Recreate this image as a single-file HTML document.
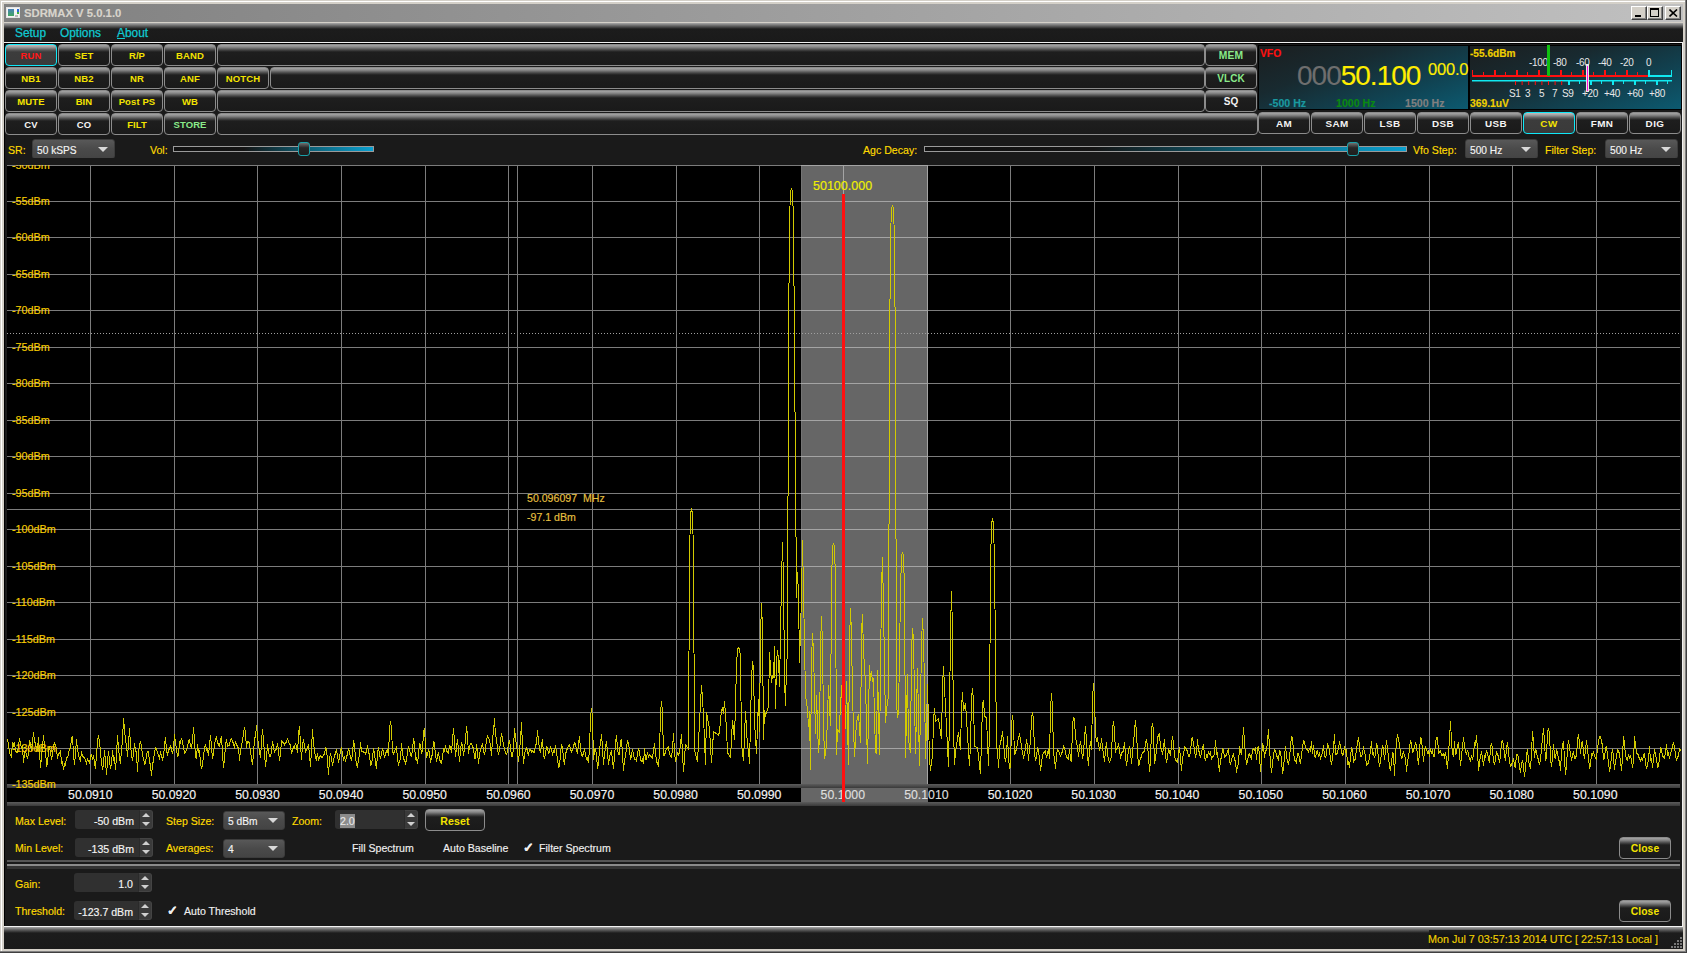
<!DOCTYPE html><html><head><meta charset="utf-8"><title>SDRMAX</title><style>
*{margin:0;padding:0;box-sizing:border-box}
html,body{width:1687px;height:953px;overflow:hidden;background:#d4d0c8;font-family:'Liberation Sans', sans-serif}
.abs{position:absolute}
.t{position:absolute;white-space:nowrap;line-height:1;-webkit-text-stroke:0.15px currentColor}
.b{position:absolute;height:22px;border:1px solid #8c8c8c;border-radius:4px;
background:linear-gradient(#a4a4a4 0px,#8a8a8a 2px,#444 5px,#1e1e1e 7px,#1a1a1a 100%);
font:bold 9.5px 'Liberation Sans', sans-serif;text-align:center;line-height:22px;color:#f2e200;letter-spacing:0.1px;white-space:nowrap}
.b.on{border-color:#10e8f8;background:linear-gradient(#c4baba 0px,#a0a0a0 2px,#5a5a5a 5px,#3c3c3c 7px,#3a3a3a 100%)}
.dd{position:absolute;height:20px;border:1px solid #3c3c3c;border-radius:3px;background:linear-gradient(#585858,#4a4a4a 50%,#444);
font:10.2px 'Liberation Sans', sans-serif;color:#f4f4f4;line-height:18px;padding-top:1.5px;padding-left:4px;white-space:nowrap;-webkit-text-stroke:0.15px currentColor}
.dd i{position:absolute;right:6px;top:7px;width:0;height:0;border-left:5px solid transparent;border-right:5px solid transparent;border-top:5px solid #d8d8d8}
.sp{position:absolute;height:19px}
.sp .v{position:absolute;left:0;top:0;bottom:0;right:14px;padding-right:5px;background:#303030;border-radius:3px 0 0 3px;text-align:right;font:10.6px 'Liberation Sans', sans-serif;color:#f4f4f4;line-height:19px;padding-top:1.5px;white-space:nowrap;-webkit-text-stroke:0.15px currentColor}
.sp .ar{position:absolute;right:0;top:0;width:14px;bottom:0;background:#3a3a3a;border-radius:0 3px 3px 0;border:1px solid #444;border-left:1px solid #2a2a2a}
.sp .ar:before{content:"";position:absolute;left:2px;top:2px;border-left:4px solid transparent;border-right:4px solid transparent;border-bottom:4px solid #d0d0d0}
.sp .ar:after{content:"";position:absolute;left:2px;bottom:2px;border-left:4px solid transparent;border-right:4px solid transparent;border-top:4px solid #d0d0d0}
</style></head><body>
<div class="abs" style="left:1px;top:1px;width:1684px;height:950px;border-left:1px solid #fff;border-top:1px solid #fff"></div>
<div class="abs" style="left:1685px;top:0;width:1px;height:952px;background:#808080"></div>
<div class="abs" style="left:1686px;top:0;width:1px;height:953px;background:#404040"></div>
<div class="abs" style="left:0;top:951px;width:1686px;height:1px;background:#808080"></div>
<div class="abs" style="left:0;top:952px;width:1687px;height:1px;background:#404040"></div>
<div class="abs" style="left:4px;top:4px;width:1679px;height:18px;background:linear-gradient(90deg,#808080,#c0c0c0)"></div>
<div class="abs" style="left:6px;top:7px;width:14px;height:11px;background:#f4f4f4;border:1px solid #e4e4e4"><div class="abs" style="left:1px;top:1px;width:6px;height:7px;background:linear-gradient(#4a80b8,#40a860)"></div><div class="abs" style="left:10px;top:1px;width:2px;height:3px;background:#2a6ad8"></div><div class="abs" style="left:10px;top:4px;width:2px;height:2px;background:#3ab040"></div><div class="abs" style="left:8px;top:7px;width:3px;height:2px;background:#bbb"></div></div>
<div class="t" style="left:24px;top:7px;font:bold 11.3px 'Liberation Sans', sans-serif;color:#d8d4cc;">SDRMAX V 5.0.1.0</div>
<div class="abs" style="left:1631px;top:6px;width:16px;height:14px;background:#d4d0c8;border-top:1px solid #fff;border-left:1px solid #fff;border-right:1px solid #404040;border-bottom:1px solid #404040;box-shadow:inset -1px -1px #808080"><div class="abs" style="left:3px;top:8px;width:6px;height:2px;background:#000"></div></div>
<div class="abs" style="left:1647px;top:6px;width:16px;height:14px;background:#d4d0c8;border-top:1px solid #fff;border-left:1px solid #fff;border-right:1px solid #404040;border-bottom:1px solid #404040;box-shadow:inset -1px -1px #808080"><div class="abs" style="left:2px;top:1px;width:9px;height:9px;border:1px solid #000;border-top-width:2px"></div></div>
<div class="abs" style="left:1665px;top:6px;width:16px;height:14px;background:#d4d0c8;border-top:1px solid #fff;border-left:1px solid #fff;border-right:1px solid #404040;border-bottom:1px solid #404040;box-shadow:inset -1px -1px #808080"><svg class="abs" style="left:3px;top:2px" width="9" height="8"><path d="M0.5,0.5 L8,7.5 M8,0.5 L0.5,7.5" stroke="#000" stroke-width="1.6"/></svg></div>
<div class="abs" style="left:4px;top:22px;width:1679px;height:1px;background:#d4d0c8"></div>
<div class="abs" style="left:4px;top:23px;width:1679px;height:19px;background:linear-gradient(#a8a8a8 0px,#606060 3px,#1c1c1c 6px,#1a1a1a 100%)"></div>
<div class="t" style="left:15px;top:26px;font:11.9px 'Liberation Sans', sans-serif;color:#10cad2;-webkit-text-stroke:0.25px #10cad2">Setup</div>
<div class="t" style="left:60px;top:26px;font:11.9px 'Liberation Sans', sans-serif;color:#10cad2;-webkit-text-stroke:0.25px #10cad2">Options</div>
<div class="t" style="left:117px;top:26px;font:11.9px 'Liberation Sans', sans-serif;color:#10cad2;-webkit-text-stroke:0.25px #10cad2"><u>A</u>bout</div>
<div class="abs" style="left:4px;top:42px;width:1679px;height:1px;background:#f0f0f0"></div>
<div class="abs" style="left:4px;top:43px;width:1679px;height:883px;background:#1a1a1a;border-left:1px solid #000;border-top:1px solid #000"></div>
<div class="abs" style="left:1682px;top:43px;width:1px;height:884px;background:#f0f0f0"></div>
<div class="b on" style="left:5px;top:44px;width:52px;color:#ff1818">RUN</div>
<div class="b" style="left:58px;top:44px;width:52px;color:#f4e400">SET</div>
<div class="b" style="left:111px;top:44px;width:52px;color:#f4e400">R/P</div>
<div class="b" style="left:164px;top:44px;width:52px;color:#f4e400">BAND</div>
<div class="b" style="left:5px;top:67px;width:52px;color:#f4e400">NB1</div>
<div class="b" style="left:58px;top:67px;width:52px;color:#f4e400">NB2</div>
<div class="b" style="left:111px;top:67px;width:52px;color:#f4e400">NR</div>
<div class="b" style="left:164px;top:67px;width:52px;color:#f4e400">ANF</div>
<div class="b" style="left:217px;top:67px;width:52px;color:#f4e400">NOTCH</div>
<div class="b" style="left:5px;top:90px;width:52px;color:#f4e400">MUTE</div>
<div class="b" style="left:58px;top:90px;width:52px;color:#f4e400">BIN</div>
<div class="b" style="left:111px;top:90px;width:52px;color:#f4e400">Post PS</div>
<div class="b" style="left:164px;top:90px;width:52px;color:#f4e400">WB</div>
<div class="b" style="left:5px;top:113px;width:52px;color:#f4f4f4">CV</div>
<div class="b" style="left:58px;top:113px;width:52px;color:#f4f4f4">CO</div>
<div class="b" style="left:111px;top:113px;width:52px;color:#f4e400">FILT</div>
<div class="b" style="left:164px;top:113px;width:52px;color:#8aea8a">STORE</div>
<div class="b" style="left:217px;top:44px;width:988px"></div>
<div class="b" style="left:270px;top:67px;width:935px"></div>
<div class="b" style="left:217px;top:90px;width:988px"></div>
<div class="b" style="left:217px;top:113px;width:1041px"></div>
<div class="b" style="left:1205px;top:44px;width:52px;color:#8aea8a;font-size:10.3px">MEM</div>
<div class="b" style="left:1205px;top:67px;width:52px;color:#8aea8a;font-size:10px">VLCK</div>
<div class="b" style="left:1205px;top:90px;width:52px;color:#f4f4f4;font-size:10px">SQ</div>
<div class="b" style="left:1258px;top:112px;width:52px;color:#f4f4f4;letter-spacing:0.4px;font-size:9.9px">AM</div>
<div class="b" style="left:1311px;top:112px;width:52px;color:#f4f4f4;letter-spacing:0.4px;font-size:9.9px">SAM</div>
<div class="b" style="left:1364px;top:112px;width:52px;color:#f4f4f4;letter-spacing:0.4px;font-size:9.9px">LSB</div>
<div class="b" style="left:1417px;top:112px;width:52px;color:#f4f4f4;letter-spacing:0.4px;font-size:9.9px">DSB</div>
<div class="b" style="left:1470px;top:112px;width:52px;color:#f4f4f4;letter-spacing:0.4px;font-size:9.9px">USB</div>
<div class="b on" style="left:1523px;top:112px;width:52px;color:#f4e400;letter-spacing:0.4px;font-size:9.9px">CW</div>
<div class="b" style="left:1576px;top:112px;width:52px;color:#f4f4f4;letter-spacing:0.4px;font-size:9.9px">FMN</div>
<div class="b" style="left:1629px;top:112px;width:52px;color:#f4f4f4;letter-spacing:0.4px;font-size:9.9px">DIG</div>
<div class="abs" style="left:1258px;top:45px;width:211px;height:65px;background:linear-gradient(160deg,#1b1e1f 0%,#182a30 35%,#104454 72%,#0c5a70 100%);border:1px solid #000"></div>
<div class="t" style="left:1260px;top:48px;font:bold 10.3px 'Liberation Sans', sans-serif;color:#ff1010;">VFO</div>
<div class="t" style="left:1297px;top:60px;font:28px 'Liberation Sans', sans-serif;color:#6e6e6e;letter-spacing:-1px">000<span style="color:#ffee00">50.100</span></div>
<div class="t" style="left:1428px;top:60px;font:16.5px 'Liberation Sans', sans-serif;color:#ffee00;letter-spacing:-0.2px">000.0</div>
<div class="t" style="left:1269px;top:97px;font:bold 10.6px 'Liberation Sans', sans-serif;color:#1a9aa0;">-500 Hz</div>
<div class="t" style="left:1336px;top:97px;font:bold 10.6px 'Liberation Sans', sans-serif;color:#0a8a10;">1000 Hz</div>
<div class="t" style="left:1405px;top:97px;font:bold 10.6px 'Liberation Sans', sans-serif;color:#808080;">1500 Hz</div>
<div class="abs" style="left:1469px;top:45px;width:213px;height:65px;background:linear-gradient(160deg,#1b1e1f 0%,#182a30 35%,#104454 72%,#0c5a70 100%);border:1px solid #000"></div>
<div class="t" style="left:1470px;top:48px;font:bold 10.1px 'Liberation Sans', sans-serif;color:#f0d000;">-55.6dBm</div>
<div class="t" style="left:1470px;top:98px;font:bold 10.3px 'Liberation Sans', sans-serif;color:#f0d000;">369.1uV</div>
<svg class="abs" style="left:1469px;top:45px" width="213" height="65" viewBox="1469 45 213 65"><text x="1529" y="66" font-family="Liberation Sans" font-size="10" fill="#e8e8e8" letter-spacing="-0.3">-100</text><text x="1553" y="66" font-family="Liberation Sans" font-size="10" fill="#e8e8e8" letter-spacing="-0.3">-80</text><text x="1576" y="66" font-family="Liberation Sans" font-size="10" fill="#e8e8e8" letter-spacing="-0.3">-60</text><text x="1598" y="66" font-family="Liberation Sans" font-size="10" fill="#e8e8e8" letter-spacing="-0.3">-40</text><text x="1620" y="66" font-family="Liberation Sans" font-size="10" fill="#e8e8e8" letter-spacing="-0.3">-20</text><text x="1646" y="66" font-family="Liberation Sans" font-size="10" fill="#e8e8e8" letter-spacing="-0.3">0</text><text x="1509" y="96.5" font-family="Liberation Sans" font-size="10" fill="#e8e8e8" letter-spacing="-0.3">S1</text><text x="1525" y="96.5" font-family="Liberation Sans" font-size="10" fill="#e8e8e8" letter-spacing="-0.3">3</text><text x="1539" y="96.5" font-family="Liberation Sans" font-size="10" fill="#e8e8e8" letter-spacing="-0.3">5</text><text x="1552" y="96.5" font-family="Liberation Sans" font-size="10" fill="#e8e8e8" letter-spacing="-0.3">7</text><text x="1562" y="96.5" font-family="Liberation Sans" font-size="10" fill="#e8e8e8" letter-spacing="-0.3">S9</text><text x="1582" y="96.5" font-family="Liberation Sans" font-size="10" fill="#e8e8e8" letter-spacing="-0.3">+20</text><text x="1604" y="96.5" font-family="Liberation Sans" font-size="10" fill="#e8e8e8" letter-spacing="-0.3">+40</text><text x="1627" y="96.5" font-family="Liberation Sans" font-size="10" fill="#e8e8e8" letter-spacing="-0.3">+60</text><text x="1649" y="96.5" font-family="Liberation Sans" font-size="10" fill="#e8e8e8" letter-spacing="-0.3">+80</text><rect x="1472" y="75" width="176" height="2" fill="#ff1010"/><rect x="1648" y="75" width="24" height="2" fill="#10e8f0"/><rect x="1472" y="72" width="1" height="4" fill="#ff1010"/><rect x="1483" y="72" width="1" height="4" fill="#ff1010"/><rect x="1494" y="70" width="2" height="6" fill="#ff1010"/><rect x="1505" y="72" width="1" height="4" fill="#ff1010"/><rect x="1516" y="70" width="2" height="6" fill="#ff1010"/><rect x="1527" y="72" width="1" height="4" fill="#ff1010"/><rect x="1538" y="70" width="2" height="6" fill="#ff1010"/><rect x="1549" y="72" width="1" height="4" fill="#ff1010"/><rect x="1560" y="70" width="2" height="6" fill="#ff1010"/><rect x="1571" y="72" width="1" height="4" fill="#ff1010"/><rect x="1582" y="70" width="2" height="6" fill="#ff1010"/><rect x="1593" y="72" width="1" height="4" fill="#ff1010"/><rect x="1604" y="70" width="2" height="6" fill="#ff1010"/><rect x="1615" y="72" width="1" height="4" fill="#ff1010"/><rect x="1626" y="70" width="2" height="6" fill="#ff1010"/><rect x="1637" y="72" width="1" height="4" fill="#ff1010"/><rect x="1648" y="70" width="2" height="6" fill="#10e8f0"/><rect x="1472" y="70" width="1" height="6" fill="#ff1010"/><rect x="1671" y="70" width="1" height="6" fill="#10e8f0"/><rect x="1472" y="80" width="200" height="1.5" fill="#10e8f0"/><rect x="1515.0" y="81" width="1" height="4" fill="#ff1010"/><rect x="1521.6" y="81" width="1" height="4" fill="#ff1010"/><rect x="1528.2" y="81" width="1" height="4" fill="#ff1010"/><rect x="1534.8" y="81" width="1" height="4" fill="#ff1010"/><rect x="1541.4" y="81" width="1" height="4" fill="#ff1010"/><rect x="1548.0" y="81" width="1" height="4" fill="#ff1010"/><rect x="1554.6" y="81" width="1" height="4" fill="#ff1010"/><rect x="1561.2" y="81" width="1" height="4" fill="#ff1010"/><rect x="1568" y="81" width="2" height="4" fill="#10e8f0"/><rect x="1579" y="81" width="1" height="3" fill="#10e8f0"/><rect x="1590" y="81" width="2" height="4" fill="#10e8f0"/><rect x="1601" y="81" width="1" height="3" fill="#10e8f0"/><rect x="1612" y="81" width="2" height="4" fill="#10e8f0"/><rect x="1623" y="81" width="1" height="3" fill="#10e8f0"/><rect x="1634" y="81" width="2" height="4" fill="#10e8f0"/><rect x="1645" y="81" width="1" height="3" fill="#10e8f0"/><rect x="1656" y="81" width="2" height="4" fill="#10e8f0"/><rect x="1667" y="81" width="1" height="3" fill="#10e8f0"/><rect x="1547" y="45" width="3" height="31" fill="#10c010"/><rect x="1586" y="64" width="3" height="28" fill="#e8e8e8"/><rect x="1587" y="66" width="1" height="25" fill="#ff10e0"/></svg>
<div class="t" style="left:8px;top:144px;font:10.6px 'Liberation Sans', sans-serif;color:#ffda00;">SR:</div>
<div class="dd" style="left:32px;top:139px;width:83px">50 kSPS<i></i></div>
<div class="t" style="left:150px;top:144px;font:10.6px 'Liberation Sans', sans-serif;color:#ffda00;">Vol:</div>
<div class="abs" style="left:173px;top:146px;width:201px;height:6px;border:1px solid #9a9a9a;background:linear-gradient(90deg,#111 0%,#141414 35%,#0e5a6e 65%,#0aa0d0 100%)"></div>
<div class="abs" style="left:298px;top:142px;width:12px;height:14px;border:1px solid #1aa0a8;border-radius:3px;background:linear-gradient(#707070,#262626 40%,#1e1e1e)"></div>
<div class="t" style="left:863px;top:144px;font:10.6px 'Liberation Sans', sans-serif;color:#ffda00;">Agc Decay:</div>
<div class="abs" style="left:924px;top:146px;width:483px;height:6px;border:1px solid #9a9a9a;background:linear-gradient(90deg,#111 0%,#141414 35%,#0e5a6e 65%,#0aa0d0 100%)"></div>
<div class="abs" style="left:1347px;top:142px;width:12px;height:14px;border:1px solid #1aa0a8;border-radius:3px;background:linear-gradient(#707070,#262626 40%,#1e1e1e)"></div>
<div class="t" style="left:1413px;top:144px;font:10.6px 'Liberation Sans', sans-serif;color:#ffda00;">Vfo Step:</div>
<div class="dd" style="left:1465px;top:139px;width:73px">500 Hz<i></i></div>
<div class="t" style="left:1545px;top:144px;font:10.6px 'Liberation Sans', sans-serif;color:#ffda00;">Filter Step:</div>
<div class="dd" style="left:1605px;top:139px;width:73px">500 Hz<i></i></div>
<div class="abs" style="left:5px;top:158px;width:1677px;height:7px;background:#1a1a1a"></div>
<svg class="abs" style="left:0;top:0" width="1687" height="953" viewBox="0 0 1687 953"><rect x="7" y="165" width="1673" height="620" fill="#000"/><rect x="801" y="165" width="127" height="620" fill="#666666"/><rect x="801" y="165" width="1" height="620" fill="#747474"/><rect x="7" y="165" width="794" height="1" fill="#7c7c7c"/><rect x="801" y="165" width="127" height="1" fill="#a4a4a4"/><rect x="928" y="165" width="752" height="1" fill="#7c7c7c"/><rect x="7" y="201" width="794" height="1" fill="#7c7c7c"/><rect x="801" y="201" width="127" height="1" fill="#a4a4a4"/><rect x="928" y="201" width="752" height="1" fill="#7c7c7c"/><rect x="7" y="237" width="794" height="1" fill="#7c7c7c"/><rect x="801" y="237" width="127" height="1" fill="#a4a4a4"/><rect x="928" y="237" width="752" height="1" fill="#7c7c7c"/><rect x="7" y="274" width="794" height="1" fill="#7c7c7c"/><rect x="801" y="274" width="127" height="1" fill="#a4a4a4"/><rect x="928" y="274" width="752" height="1" fill="#7c7c7c"/><rect x="7" y="310" width="794" height="1" fill="#7c7c7c"/><rect x="801" y="310" width="127" height="1" fill="#a4a4a4"/><rect x="928" y="310" width="752" height="1" fill="#7c7c7c"/><rect x="7" y="347" width="794" height="1" fill="#7c7c7c"/><rect x="801" y="347" width="127" height="1" fill="#a4a4a4"/><rect x="928" y="347" width="752" height="1" fill="#7c7c7c"/><rect x="7" y="383" width="794" height="1" fill="#7c7c7c"/><rect x="801" y="383" width="127" height="1" fill="#a4a4a4"/><rect x="928" y="383" width="752" height="1" fill="#7c7c7c"/><rect x="7" y="420" width="794" height="1" fill="#7c7c7c"/><rect x="801" y="420" width="127" height="1" fill="#a4a4a4"/><rect x="928" y="420" width="752" height="1" fill="#7c7c7c"/><rect x="7" y="456" width="794" height="1" fill="#7c7c7c"/><rect x="801" y="456" width="127" height="1" fill="#a4a4a4"/><rect x="928" y="456" width="752" height="1" fill="#7c7c7c"/><rect x="7" y="493" width="794" height="1" fill="#7c7c7c"/><rect x="801" y="493" width="127" height="1" fill="#a4a4a4"/><rect x="928" y="493" width="752" height="1" fill="#7c7c7c"/><rect x="7" y="529" width="794" height="1" fill="#7c7c7c"/><rect x="801" y="529" width="127" height="1" fill="#a4a4a4"/><rect x="928" y="529" width="752" height="1" fill="#7c7c7c"/><rect x="7" y="566" width="794" height="1" fill="#7c7c7c"/><rect x="801" y="566" width="127" height="1" fill="#a4a4a4"/><rect x="928" y="566" width="752" height="1" fill="#7c7c7c"/><rect x="7" y="602" width="794" height="1" fill="#7c7c7c"/><rect x="801" y="602" width="127" height="1" fill="#a4a4a4"/><rect x="928" y="602" width="752" height="1" fill="#7c7c7c"/><rect x="7" y="639" width="794" height="1" fill="#7c7c7c"/><rect x="801" y="639" width="127" height="1" fill="#a4a4a4"/><rect x="928" y="639" width="752" height="1" fill="#7c7c7c"/><rect x="7" y="675" width="794" height="1" fill="#7c7c7c"/><rect x="801" y="675" width="127" height="1" fill="#a4a4a4"/><rect x="928" y="675" width="752" height="1" fill="#7c7c7c"/><rect x="7" y="712" width="794" height="1" fill="#7c7c7c"/><rect x="801" y="712" width="127" height="1" fill="#a4a4a4"/><rect x="928" y="712" width="752" height="1" fill="#7c7c7c"/><rect x="7" y="748" width="794" height="1" fill="#7c7c7c"/><rect x="801" y="748" width="127" height="1" fill="#a4a4a4"/><rect x="928" y="748" width="752" height="1" fill="#7c7c7c"/><line x1="7" y1="333.5" x2="1680" y2="333.5" stroke="#a0a0a0" stroke-width="1" stroke-dasharray="1 2" shape-rendering="crispEdges"/><rect x="90" y="165" width="1" height="620" fill="#7c7c7c"/><rect x="174" y="165" width="1" height="620" fill="#7c7c7c"/><rect x="257" y="165" width="1" height="620" fill="#7c7c7c"/><rect x="341" y="165" width="1" height="620" fill="#7c7c7c"/><rect x="425" y="165" width="1" height="620" fill="#7c7c7c"/><rect x="508" y="165" width="1" height="620" fill="#7c7c7c"/><rect x="592" y="165" width="1" height="620" fill="#7c7c7c"/><rect x="676" y="165" width="1" height="620" fill="#7c7c7c"/><rect x="759" y="165" width="1" height="620" fill="#7c7c7c"/><rect x="843" y="165" width="1" height="620" fill="#a4a4a4"/><rect x="927" y="165" width="1" height="620" fill="#a4a4a4"/><rect x="1010" y="165" width="1" height="620" fill="#7c7c7c"/><rect x="1094" y="165" width="1" height="620" fill="#7c7c7c"/><rect x="1178" y="165" width="1" height="620" fill="#7c7c7c"/><rect x="1261" y="165" width="1" height="620" fill="#7c7c7c"/><rect x="1345" y="165" width="1" height="620" fill="#7c7c7c"/><rect x="1429" y="165" width="1" height="620" fill="#7c7c7c"/><rect x="1512" y="165" width="1" height="620" fill="#7c7c7c"/><rect x="1596" y="165" width="1" height="620" fill="#7c7c7c"/><rect x="517" y="165" width="1" height="620" fill="#7c7c7c"/><rect x="7" y="509" width="794" height="1" fill="#7c7c7c"/><rect x="801" y="509" width="127" height="1" fill="#a4a4a4"/><rect x="928" y="509" width="752" height="1" fill="#7c7c7c"/><path d="M7.5,739L8.5,745L9.5,753L10.5,755L11.5,757L12.5,742L13.5,745L14.5,742L15.5,751L16.5,752L17.5,752L18.5,746L19.5,738L20.5,743L21.5,748L22.5,746L23.5,763L24.5,753L25.5,751L26.5,755L27.5,759L28.5,753L29.5,740L30.5,744L31.5,751L32.5,742L33.5,732L34.5,742L35.5,743L36.5,751L37.5,750L38.5,737L39.5,752L40.5,768L41.5,757L42.5,747L43.5,735L44.5,746L45.5,750L46.5,766L47.5,764L48.5,750L49.5,746L50.5,753L51.5,758L52.5,755L53.5,745L54.5,743L55.5,746L56.5,748L57.5,759L58.5,754L59.5,753L60.5,751L61.5,763L62.5,762L63.5,770L64.5,764L65.5,765L66.5,757L67.5,757L68.5,755L69.5,748L70.5,748L71.5,739L72.5,736L73.5,754L74.5,765L75.5,754L76.5,739L77.5,750L78.5,754L79.5,759L80.5,761L81.5,751L82.5,756L83.5,757L84.5,758L85.5,760L86.5,763L87.5,759L88.5,761L89.5,763L90.5,757L91.5,754L92.5,760L93.5,755L94.5,763L95.5,769L96.5,754L97.5,742L98.5,735L99.5,742L100.5,751L101.5,764L102.5,768L103.5,765L104.5,750L105.5,761L106.5,775L107.5,761L108.5,751L109.5,761L110.5,769L111.5,764L112.5,750L113.5,760L114.5,758L115.5,770L116.5,756L117.5,735L118.5,748L119.5,758L120.5,764L121.5,749L122.5,741L123.5,718L124.5,730L125.5,740L126.5,745L127.5,757L128.5,744L129.5,728L130.5,745L131.5,754L132.5,761L133.5,753L134.5,743L135.5,750L136.5,753L137.5,772L138.5,753L139.5,745L140.5,741L141.5,746L142.5,756L143.5,758L144.5,764L145.5,763L146.5,756L147.5,751L148.5,751L149.5,762L150.5,765L151.5,776L152.5,764L153.5,761L154.5,752L155.5,748L156.5,749L157.5,753L158.5,755L159.5,758L160.5,753L161.5,756L162.5,759L163.5,756L164.5,746L165.5,737L166.5,751L167.5,754L168.5,751L169.5,748L170.5,746L171.5,749L172.5,754L173.5,748L174.5,734L175.5,744L176.5,748L177.5,757L178.5,754L179.5,742L180.5,743L181.5,738L182.5,742L183.5,747L184.5,753L185.5,752L186.5,750L187.5,746L188.5,742L189.5,739L190.5,746L191.5,748L192.5,741L193.5,727L194.5,740L195.5,757L196.5,758L197.5,744L198.5,752L199.5,751L200.5,763L201.5,769L202.5,765L203.5,756L204.5,748L205.5,744L206.5,750L207.5,749L208.5,756L209.5,745L210.5,735L211.5,746L212.5,759L213.5,754L214.5,745L215.5,739L216.5,737L217.5,743L218.5,744L219.5,747L220.5,739L221.5,737L222.5,753L223.5,768L224.5,759L225.5,745L226.5,739L227.5,746L228.5,745L229.5,745L230.5,740L231.5,739L232.5,741L233.5,744L234.5,747L235.5,742L236.5,744L237.5,747L238.5,747L239.5,761L240.5,750L241.5,746L242.5,741L243.5,733L244.5,727L245.5,733L246.5,748L247.5,741L248.5,741L249.5,744L250.5,751L251.5,758L252.5,765L253.5,754L254.5,738L255.5,737L256.5,725L257.5,737L258.5,744L259.5,751L260.5,758L261.5,742L262.5,729L263.5,741L264.5,752L265.5,767L266.5,758L267.5,744L268.5,751L269.5,756L270.5,756L271.5,752L272.5,741L273.5,747L274.5,752L275.5,750L276.5,749L277.5,743L278.5,751L279.5,761L280.5,754L281.5,741L282.5,742L283.5,742L284.5,745L285.5,743L286.5,742L287.5,738L288.5,742L289.5,744L290.5,745L291.5,754L292.5,750L293.5,747L294.5,748L295.5,743L296.5,747L297.5,753L298.5,735L299.5,726L300.5,744L301.5,760L302.5,744L303.5,741L304.5,745L305.5,752L306.5,750L307.5,748L308.5,744L309.5,755L310.5,767L311.5,750L312.5,729L313.5,744L314.5,749L315.5,758L316.5,760L317.5,753L318.5,761L319.5,757L320.5,756L321.5,757L322.5,757L323.5,755L324.5,754L325.5,748L326.5,749L327.5,761L328.5,775L329.5,759L330.5,753L331.5,758L332.5,766L333.5,761L334.5,756L335.5,753L336.5,749L337.5,757L338.5,761L339.5,758L340.5,750L341.5,748L342.5,754L343.5,759L344.5,756L345.5,762L346.5,757L347.5,754L348.5,748L349.5,752L350.5,757L351.5,761L352.5,754L353.5,740L354.5,746L355.5,758L356.5,764L357.5,768L358.5,758L359.5,756L360.5,742L361.5,751L362.5,751L363.5,752L364.5,752L365.5,754L366.5,751L367.5,745L368.5,753L369.5,754L370.5,766L371.5,763L372.5,759L373.5,748L374.5,753L375.5,763L376.5,769L377.5,754L378.5,747L379.5,754L380.5,759L381.5,753L382.5,749L383.5,751L384.5,758L385.5,754L386.5,751L387.5,750L388.5,756L389.5,729L390.5,721L391.5,728L392.5,752L393.5,754L394.5,751L395.5,749L396.5,747L397.5,759L398.5,764L399.5,761L400.5,759L401.5,743L402.5,753L403.5,759L404.5,760L405.5,763L406.5,760L407.5,752L408.5,746L409.5,750L410.5,754L411.5,757L412.5,750L413.5,738L414.5,743L415.5,760L416.5,757L417.5,764L418.5,755L419.5,744L420.5,745L421.5,754L422.5,750L423.5,733L424.5,728L425.5,746L426.5,757L427.5,755L428.5,749L429.5,753L430.5,763L431.5,757L432.5,754L433.5,741L434.5,744L435.5,755L436.5,760L437.5,757L438.5,752L439.5,759L440.5,762L441.5,763L442.5,758L443.5,749L444.5,751L445.5,745L446.5,751L447.5,752L448.5,753L449.5,746L450.5,747L451.5,753L452.5,740L453.5,728L454.5,742L455.5,757L456.5,748L457.5,739L458.5,750L459.5,762L460.5,750L461.5,742L462.5,746L463.5,756L464.5,748L465.5,740L466.5,726L467.5,736L468.5,754L469.5,747L470.5,743L471.5,743L472.5,747L473.5,748L474.5,758L475.5,758L476.5,744L477.5,751L478.5,764L479.5,755L480.5,749L481.5,747L482.5,743L483.5,750L484.5,755L485.5,749L486.5,740L487.5,736L488.5,738L489.5,740L490.5,746L491.5,756L492.5,738L493.5,733L494.5,718L495.5,736L496.5,738L497.5,749L498.5,755L499.5,750L500.5,742L501.5,733L502.5,738L503.5,745L504.5,749L505.5,753L506.5,754L507.5,752L508.5,743L509.5,741L510.5,747L511.5,756L512.5,756L513.5,749L514.5,728L515.5,737L516.5,747L517.5,751L518.5,762L519.5,750L520.5,741L521.5,722L522.5,747L523.5,764L524.5,755L525.5,750L526.5,748L527.5,751L528.5,756L529.5,749L530.5,749L531.5,752L532.5,751L533.5,752L534.5,752L535.5,744L536.5,744L537.5,730L538.5,741L539.5,749L540.5,753L541.5,746L542.5,739L543.5,755L544.5,759L545.5,754L546.5,747L547.5,748L548.5,753L549.5,752L550.5,747L551.5,749L552.5,754L553.5,751L554.5,752L555.5,745L556.5,753L557.5,759L558.5,767L559.5,766L560.5,754L561.5,744L562.5,748L563.5,758L564.5,765L565.5,754L566.5,751L567.5,748L568.5,746L569.5,745L570.5,749L571.5,752L572.5,750L573.5,746L574.5,743L575.5,744L576.5,749L577.5,754L578.5,744L579.5,736L580.5,749L581.5,755L582.5,756L583.5,753L584.5,750L585.5,754L586.5,759L587.5,758L588.5,763L589.5,748L590.5,718L591.5,708L592.5,718L593.5,760L594.5,750L595.5,749L596.5,755L597.5,769L598.5,763L599.5,749L600.5,744L601.5,734L602.5,748L603.5,765L604.5,754L605.5,748L606.5,741L607.5,753L608.5,765L609.5,758L610.5,753L611.5,751L612.5,760L613.5,769L614.5,756L615.5,744L616.5,735L617.5,749L618.5,754L619.5,754L620.5,741L621.5,740L622.5,754L623.5,771L624.5,760L625.5,756L626.5,748L627.5,740L628.5,744L629.5,750L630.5,760L631.5,756L632.5,749L633.5,754L634.5,759L635.5,759L636.5,761L637.5,754L638.5,748L639.5,752L640.5,760L641.5,761L642.5,759L643.5,764L644.5,748L645.5,759L646.5,759L647.5,752L648.5,757L649.5,755L650.5,756L651.5,757L652.5,758L653.5,751L654.5,743L655.5,752L656.5,761L657.5,764L658.5,766L659.5,752L660.5,714L661.5,701L662.5,713L663.5,755L664.5,755L665.5,752L666.5,748L667.5,748L668.5,747L669.5,754L670.5,756L671.5,757L672.5,750L673.5,733L674.5,751L675.5,762L676.5,758L677.5,752L678.5,755L679.5,753L681.5,734L683.5,772L685.5,745L686.5,746L688.5,749L689.5,557L690.5,513L691.5,510L692.5,513L693.5,554L694.5,750L697.5,762L700.5,703L701.5,685L702.5,698L703.5,716L705.5,765L706.5,712L709.5,729L711.5,763L713.5,732L715.5,733L718.5,735L719.5,732L721.5,710L722.5,708L723.5,714L724.5,701L726.5,729L727.5,753L730.5,757L732.5,720L734.5,740L736.5,666L737.5,649L738.5,648L739.5,649L740.5,657L741.5,743L743.5,761L745.5,711L747.5,746L748.5,750L749.5,764L751.5,679L752.5,661L753.5,668L754.5,722L756.5,754L758.5,699L759.5,732L760.5,636L761.5,603L762.5,630L763.5,740L764.5,710L765.5,715L766.5,712L768.5,707L769.5,652L771.5,683L772.5,676L773.5,678L774.5,646L775.5,709L776.5,662L777.5,650L778.5,659L779.5,687L781.5,580L782.5,542L783.5,579L784.5,679L785.5,706L786.5,665L787.5,654L788.5,349L789.5,221L790.5,191L791.5,189L792.5,191L793.5,220L794.5,349L796.5,598L797.5,572L798.5,594L799.5,663L801.5,596L802.5,540L803.5,591L805.5,696L807.5,709L808.5,727L809.5,711L810.5,770L811.5,661L812.5,633L813.5,651L815.5,734L816.5,695L818.5,753L819.5,738L820.5,647L821.5,616L822.5,645L823.5,721L824.5,759L826.5,746L828.5,685L830.5,726L831.5,585L832.5,546L833.5,544L834.5,546L835.5,580L836.5,755L837.5,730L839.5,732L840.5,699L841.5,696L842.5,675L843.5,686L845.5,729L846.5,681L848.5,765L849.5,643L850.5,608L851.5,634L852.5,696L854.5,757L856.5,722L858.5,714L860.5,743L861.5,633L862.5,614L863.5,651L865.5,683L867.5,764L869.5,665L870.5,681L871.5,671L872.5,682L873.5,678L875.5,752L876.5,753L877.5,670L879.5,755L881.5,588L882.5,557L883.5,607L885.5,723L886.5,710L888.5,696L889.5,365L890.5,238L891.5,208L892.5,206L893.5,208L894.5,240L895.5,372L896.5,702L897.5,718L898.5,713L900.5,593L901.5,555L902.5,553L903.5,555L904.5,590L905.5,758L907.5,674L908.5,740L910.5,753L911.5,651L912.5,628L913.5,640L915.5,754L917.5,668L919.5,766L921.5,644L922.5,618L923.5,639L924.5,684L925.5,759L926.5,724L927.5,684L929.5,758L930.5,771L931.5,761L932.5,757L933.5,721L934.5,708L935.5,721L938.5,719L941.5,739L942.5,687L943.5,666L944.5,687L946.5,727L948.5,767L949.5,717L950.5,629L951.5,591L952.5,630L953.5,728L954.5,765L955.5,752L958.5,732L960.5,750L961.5,708L962.5,692L963.5,711L965.5,703L968.5,751L969.5,766L970.5,744L971.5,699L972.5,688L973.5,701L974.5,746L977.5,748L980.5,774L982.5,705L983.5,700L984.5,716L986.5,718L988.5,766L989.5,728L990.5,565L991.5,523L992.5,520L993.5,523L994.5,562L996.5,748L997.5,749L998.5,768L999.5,750L1000.5,741L1001.5,740L1002.5,731L1003.5,743L1004.5,755L1005.5,762L1006.5,755L1007.5,736L1008.5,757L1009.5,768L1010.5,767L1011.5,726L1012.5,715L1013.5,725L1014.5,755L1015.5,752L1016.5,749L1017.5,743L1018.5,738L1019.5,735L1020.5,739L1021.5,747L1022.5,752L1023.5,757L1024.5,754L1025.5,749L1026.5,739L1027.5,746L1028.5,761L1029.5,747L1030.5,743L1031.5,718L1032.5,712L1033.5,720L1034.5,753L1035.5,761L1036.5,757L1037.5,748L1038.5,750L1039.5,759L1040.5,771L1041.5,764L1042.5,755L1043.5,753L1044.5,752L1045.5,751L1046.5,758L1047.5,754L1048.5,749L1049.5,759L1050.5,710L1051.5,693L1052.5,708L1053.5,754L1054.5,758L1055.5,769L1056.5,755L1057.5,750L1058.5,751L1059.5,753L1060.5,757L1061.5,753L1062.5,752L1063.5,746L1064.5,748L1065.5,752L1066.5,757L1067.5,758L1068.5,759L1069.5,749L1070.5,759L1071.5,762L1072.5,725L1073.5,717L1074.5,720L1075.5,737L1076.5,743L1077.5,747L1078.5,757L1079.5,748L1080.5,741L1081.5,748L1082.5,759L1083.5,753L1084.5,738L1085.5,726L1086.5,741L1087.5,755L1088.5,766L1089.5,749L1090.5,741L1091.5,750L1092.5,700L1093.5,683L1094.5,699L1095.5,733L1096.5,742L1097.5,739L1098.5,744L1099.5,750L1100.5,748L1101.5,738L1102.5,748L1103.5,754L1104.5,762L1105.5,750L1106.5,742L1107.5,753L1108.5,760L1109.5,762L1110.5,760L1111.5,756L1112.5,729L1113.5,721L1114.5,730L1115.5,753L1116.5,748L1117.5,748L1118.5,745L1119.5,749L1120.5,759L1121.5,754L1122.5,751L1123.5,751L1124.5,742L1125.5,756L1126.5,766L1127.5,759L1128.5,749L1129.5,747L1130.5,751L1131.5,764L1132.5,752L1133.5,743L1134.5,731L1135.5,720L1136.5,734L1137.5,751L1138.5,766L1139.5,763L1140.5,758L1141.5,757L1142.5,752L1143.5,752L1144.5,751L1145.5,744L1146.5,739L1147.5,746L1148.5,756L1149.5,772L1150.5,760L1151.5,729L1152.5,723L1153.5,731L1154.5,764L1155.5,758L1156.5,750L1157.5,738L1158.5,735L1159.5,734L1160.5,748L1161.5,748L1162.5,755L1163.5,747L1164.5,739L1165.5,755L1166.5,763L1167.5,757L1168.5,749L1169.5,751L1170.5,756L1171.5,745L1172.5,736L1173.5,743L1174.5,756L1175.5,760L1176.5,760L1177.5,763L1178.5,753L1179.5,747L1180.5,759L1181.5,771L1182.5,757L1183.5,755L1184.5,747L1185.5,748L1186.5,749L1187.5,752L1188.5,756L1189.5,756L1190.5,752L1191.5,740L1192.5,737L1193.5,744L1194.5,750L1195.5,758L1196.5,753L1197.5,739L1198.5,750L1199.5,753L1200.5,758L1201.5,752L1202.5,748L1203.5,744L1204.5,756L1205.5,761L1206.5,755L1207.5,757L1208.5,752L1209.5,754L1210.5,752L1211.5,759L1212.5,757L1213.5,756L1214.5,754L1215.5,740L1216.5,754L1217.5,753L1218.5,763L1219.5,772L1220.5,759L1221.5,758L1222.5,748L1223.5,751L1224.5,757L1225.5,756L1226.5,755L1227.5,751L1228.5,749L1229.5,760L1230.5,765L1231.5,760L1232.5,756L1233.5,754L1234.5,760L1235.5,760L1236.5,773L1237.5,766L1238.5,764L1239.5,746L1240.5,752L1241.5,754L1242.5,744L1243.5,727L1244.5,742L1245.5,756L1246.5,764L1247.5,762L1248.5,755L1249.5,754L1250.5,757L1251.5,759L1252.5,750L1253.5,749L1254.5,750L1255.5,748L1256.5,760L1257.5,748L1258.5,747L1259.5,755L1260.5,772L1261.5,758L1262.5,744L1263.5,746L1264.5,758L1265.5,751L1266.5,750L1267.5,742L1268.5,729L1269.5,748L1270.5,763L1271.5,773L1272.5,764L1273.5,755L1274.5,750L1275.5,751L1276.5,755L1277.5,758L1278.5,760L1279.5,751L1280.5,752L1281.5,759L1282.5,774L1283.5,768L1284.5,756L1285.5,746L1286.5,756L1287.5,761L1288.5,765L1289.5,758L1290.5,746L1291.5,737L1292.5,738L1293.5,751L1294.5,760L1295.5,761L1296.5,763L1297.5,753L1298.5,753L1299.5,759L1300.5,764L1301.5,755L1302.5,748L1303.5,740L1304.5,743L1305.5,747L1306.5,749L1307.5,750L1308.5,752L1309.5,748L1310.5,752L1311.5,741L1312.5,754L1313.5,745L1314.5,755L1315.5,758L1316.5,752L1317.5,751L1318.5,757L1319.5,754L1320.5,758L1321.5,755L1322.5,753L1323.5,745L1324.5,756L1325.5,757L1326.5,755L1327.5,744L1328.5,746L1329.5,750L1330.5,760L1331.5,763L1332.5,759L1333.5,748L1334.5,734L1335.5,754L1336.5,754L1337.5,753L1338.5,747L1339.5,743L1340.5,746L1341.5,752L1342.5,755L1343.5,754L1344.5,746L1345.5,752L1346.5,750L1347.5,764L1348.5,762L1349.5,768L1350.5,756L1351.5,748L1352.5,750L1353.5,762L1354.5,760L1355.5,759L1356.5,748L1357.5,744L1358.5,737L1359.5,747L1360.5,756L1361.5,756L1362.5,754L1363.5,746L1364.5,753L1365.5,755L1366.5,766L1367.5,763L1368.5,763L1369.5,757L1370.5,751L1371.5,741L1372.5,754L1373.5,753L1374.5,758L1375.5,754L1376.5,743L1377.5,747L1378.5,760L1379.5,765L1380.5,762L1381.5,753L1382.5,745L1383.5,749L1384.5,760L1385.5,750L1386.5,740L1387.5,750L1388.5,755L1389.5,768L1390.5,770L1391.5,763L1392.5,753L1393.5,754L1394.5,776L1395.5,753L1396.5,743L1397.5,734L1398.5,739L1399.5,745L1400.5,752L1401.5,759L1402.5,756L1403.5,751L1404.5,756L1405.5,758L1406.5,772L1407.5,760L1408.5,758L1409.5,748L1410.5,741L1411.5,743L1412.5,753L1413.5,750L1414.5,747L1415.5,743L1416.5,745L1417.5,757L1418.5,765L1419.5,751L1420.5,737L1421.5,740L1422.5,749L1423.5,762L1424.5,750L1425.5,747L1426.5,749L1427.5,753L1428.5,751L1429.5,757L1430.5,748L1431.5,754L1432.5,751L1433.5,756L1434.5,756L1435.5,743L1436.5,737L1437.5,737L1438.5,753L1439.5,752L1440.5,751L1441.5,755L1442.5,755L1443.5,754L1444.5,757L1445.5,752L1446.5,760L1447.5,769L1448.5,753L1449.5,739L1450.5,721L1451.5,741L1452.5,754L1453.5,756L1454.5,741L1455.5,754L1456.5,753L1457.5,746L1458.5,742L1459.5,753L1460.5,766L1461.5,756L1462.5,747L1463.5,737L1464.5,746L1465.5,752L1466.5,754L1467.5,750L1468.5,754L1469.5,759L1470.5,761L1471.5,755L1472.5,760L1473.5,754L1474.5,743L1475.5,745L1476.5,735L1477.5,750L1478.5,771L1479.5,763L1480.5,756L1481.5,753L1482.5,757L1483.5,766L1484.5,756L1485.5,757L1486.5,750L1487.5,754L1488.5,758L1489.5,763L1490.5,748L1491.5,743L1492.5,749L1493.5,762L1494.5,764L1495.5,760L1496.5,751L1497.5,755L1498.5,756L1499.5,763L1500.5,755L1501.5,742L1502.5,741L1503.5,745L1504.5,754L1505.5,761L1506.5,748L1507.5,742L1508.5,752L1509.5,761L1510.5,767L1511.5,764L1512.5,763L1513.5,758L1514.5,766L1515.5,767L1516.5,754L1517.5,754L1518.5,758L1519.5,767L1520.5,773L1521.5,764L1522.5,760L1523.5,766L1524.5,777L1525.5,768L1526.5,756L1527.5,749L1528.5,760L1529.5,765L1530.5,769L1531.5,753L1532.5,731L1533.5,743L1534.5,758L1535.5,749L1536.5,752L1537.5,757L1538.5,760L1539.5,765L1540.5,760L1541.5,748L1542.5,738L1543.5,728L1544.5,741L1545.5,761L1546.5,757L1547.5,732L1548.5,728L1549.5,733L1550.5,758L1551.5,767L1552.5,757L1553.5,744L1554.5,756L1555.5,759L1556.5,750L1557.5,752L1558.5,760L1559.5,760L1560.5,771L1561.5,752L1562.5,746L1563.5,741L1564.5,759L1565.5,775L1566.5,765L1567.5,749L1568.5,740L1569.5,747L1570.5,754L1571.5,759L1572.5,756L1573.5,751L1574.5,758L1575.5,758L1576.5,755L1577.5,741L1578.5,734L1579.5,744L1580.5,754L1581.5,744L1582.5,741L1583.5,752L1584.5,759L1585.5,750L1586.5,740L1587.5,750L1588.5,757L1589.5,769L1590.5,765L1591.5,754L1592.5,755L1593.5,751L1594.5,756L1595.5,758L1596.5,759L1597.5,748L1598.5,743L1599.5,736L1600.5,736L1601.5,742L1602.5,745L1603.5,760L1604.5,757L1605.5,749L1606.5,746L1607.5,756L1608.5,761L1609.5,772L1610.5,767L1611.5,756L1612.5,749L1613.5,757L1614.5,770L1615.5,761L1616.5,757L1617.5,750L1618.5,751L1619.5,754L1620.5,761L1621.5,771L1622.5,757L1623.5,736L1624.5,744L1625.5,756L1626.5,758L1627.5,761L1628.5,754L1629.5,758L1630.5,756L1631.5,760L1632.5,768L1633.5,761L1634.5,736L1635.5,745L1636.5,753L1637.5,753L1638.5,756L1639.5,759L1640.5,761L1641.5,758L1642.5,760L1643.5,756L1644.5,753L1645.5,763L1646.5,769L1647.5,765L1648.5,760L1649.5,746L1650.5,761L1651.5,758L1652.5,768L1653.5,759L1654.5,749L1655.5,754L1656.5,759L1657.5,767L1658.5,766L1659.5,759L1660.5,748L1661.5,749L1662.5,756L1663.5,757L1664.5,758L1665.5,753L1666.5,744L1667.5,755L1668.5,753L1669.5,759L1670.5,754L1671.5,750L1672.5,747L1673.5,742L1674.5,748L1675.5,754L1676.5,761L1677.5,757L1678.5,756L1679.5,748L1680.5,751" fill="none" stroke="#d2ca00" stroke-width="1" shape-rendering="crispEdges"/><rect x="842" y="194" width="3" height="608" fill="#ff1010"/></svg>
<div class="t" style="left:813px;top:179px;font:12.5px 'Liberation Sans', sans-serif;color:#f0f000;">50100.000</div>
<div class="t" style="left:527px;top:492px;font:10.6px 'Liberation Sans', sans-serif;color:#e8c040;">50.096097&nbsp; MHz</div>
<div class="t" style="left:527px;top:511px;font:10.6px 'Liberation Sans', sans-serif;color:#e8c040;">-97.1 dBm</div>
<div class="abs" style="left:7px;top:784px;width:1673px;height:4px;background:linear-gradient(#5c5c5c,#3a3a3a)"></div>
<div class="t" style="left:12px;top:159px;font:10.8px 'Liberation Sans', sans-serif;color:#f8ce00;">-50dBm</div>
<div class="t" style="left:12px;top:195px;font:10.8px 'Liberation Sans', sans-serif;color:#f8ce00;">-55dBm</div>
<div class="t" style="left:12px;top:231px;font:10.8px 'Liberation Sans', sans-serif;color:#f8ce00;">-60dBm</div>
<div class="t" style="left:12px;top:268px;font:10.8px 'Liberation Sans', sans-serif;color:#f8ce00;">-65dBm</div>
<div class="t" style="left:12px;top:304px;font:10.8px 'Liberation Sans', sans-serif;color:#f8ce00;">-70dBm</div>
<div class="t" style="left:12px;top:341px;font:10.8px 'Liberation Sans', sans-serif;color:#f8ce00;">-75dBm</div>
<div class="t" style="left:12px;top:377px;font:10.8px 'Liberation Sans', sans-serif;color:#f8ce00;">-80dBm</div>
<div class="t" style="left:12px;top:414px;font:10.8px 'Liberation Sans', sans-serif;color:#f8ce00;">-85dBm</div>
<div class="t" style="left:12px;top:450px;font:10.8px 'Liberation Sans', sans-serif;color:#f8ce00;">-90dBm</div>
<div class="t" style="left:12px;top:487px;font:10.8px 'Liberation Sans', sans-serif;color:#f8ce00;">-95dBm</div>
<div class="t" style="left:12px;top:523px;font:10.8px 'Liberation Sans', sans-serif;color:#f8ce00;">-100dBm</div>
<div class="t" style="left:12px;top:560px;font:10.8px 'Liberation Sans', sans-serif;color:#f8ce00;">-105dBm</div>
<div class="t" style="left:12px;top:596px;font:10.8px 'Liberation Sans', sans-serif;color:#f8ce00;">-110dBm</div>
<div class="t" style="left:12px;top:633px;font:10.8px 'Liberation Sans', sans-serif;color:#f8ce00;">-115dBm</div>
<div class="t" style="left:12px;top:669px;font:10.8px 'Liberation Sans', sans-serif;color:#f8ce00;">-120dBm</div>
<div class="t" style="left:12px;top:706px;font:10.8px 'Liberation Sans', sans-serif;color:#f8ce00;">-125dBm</div>
<div class="t" style="left:12px;top:742px;font:10.8px 'Liberation Sans', sans-serif;color:#f8ce00;">-130dBm</div>
<div class="t" style="left:12px;top:778px;font:10.8px 'Liberation Sans', sans-serif;color:#f8ce00;">-135dBm</div>
<div class="abs" style="left:5px;top:158px;width:1677px;height:7px;background:#1a1a1a"></div>
<div class="abs" style="left:7px;top:788px;width:1673px;height:14px;background:#000"></div>
<div class="abs" style="left:801px;top:788px;width:127px;height:14px;background:#666"></div>
<div class="t" style="left:59.8px;top:788px;width:61px;text-align:center;font:12.3px 'Liberation Sans', sans-serif;color:#f4f4f4">50.0910</div>
<div class="t" style="left:143.4px;top:788px;width:61px;text-align:center;font:12.3px 'Liberation Sans', sans-serif;color:#f4f4f4">50.0920</div>
<div class="t" style="left:227.0px;top:788px;width:61px;text-align:center;font:12.3px 'Liberation Sans', sans-serif;color:#f4f4f4">50.0930</div>
<div class="t" style="left:310.6px;top:788px;width:61px;text-align:center;font:12.3px 'Liberation Sans', sans-serif;color:#f4f4f4">50.0940</div>
<div class="t" style="left:394.2px;top:788px;width:61px;text-align:center;font:12.3px 'Liberation Sans', sans-serif;color:#f4f4f4">50.0950</div>
<div class="t" style="left:477.9px;top:788px;width:61px;text-align:center;font:12.3px 'Liberation Sans', sans-serif;color:#f4f4f4">50.0960</div>
<div class="t" style="left:561.5px;top:788px;width:61px;text-align:center;font:12.3px 'Liberation Sans', sans-serif;color:#f4f4f4">50.0970</div>
<div class="t" style="left:645.1px;top:788px;width:61px;text-align:center;font:12.3px 'Liberation Sans', sans-serif;color:#f4f4f4">50.0980</div>
<div class="t" style="left:728.7px;top:788px;width:61px;text-align:center;font:12.3px 'Liberation Sans', sans-serif;color:#f4f4f4">50.0990</div>
<div class="t" style="left:812.3px;top:788px;width:61px;text-align:center;font:12.3px 'Liberation Sans', sans-serif;color:#dedede">50.1000</div>
<div class="t" style="left:895.9px;top:788px;width:61px;text-align:center;font:12.3px 'Liberation Sans', sans-serif;color:#dedede">50.1010</div>
<div class="t" style="left:979.5px;top:788px;width:61px;text-align:center;font:12.3px 'Liberation Sans', sans-serif;color:#f4f4f4">50.1020</div>
<div class="t" style="left:1063.1px;top:788px;width:61px;text-align:center;font:12.3px 'Liberation Sans', sans-serif;color:#f4f4f4">50.1030</div>
<div class="t" style="left:1146.7px;top:788px;width:61px;text-align:center;font:12.3px 'Liberation Sans', sans-serif;color:#f4f4f4">50.1040</div>
<div class="t" style="left:1230.3px;top:788px;width:61px;text-align:center;font:12.3px 'Liberation Sans', sans-serif;color:#f4f4f4">50.1050</div>
<div class="t" style="left:1314.0px;top:788px;width:61px;text-align:center;font:12.3px 'Liberation Sans', sans-serif;color:#f4f4f4">50.1060</div>
<div class="t" style="left:1397.6px;top:788px;width:61px;text-align:center;font:12.3px 'Liberation Sans', sans-serif;color:#f4f4f4">50.1070</div>
<div class="t" style="left:1481.2px;top:788px;width:61px;text-align:center;font:12.3px 'Liberation Sans', sans-serif;color:#f4f4f4">50.1080</div>
<div class="t" style="left:1564.8px;top:788px;width:61px;text-align:center;font:12.3px 'Liberation Sans', sans-serif;color:#f4f4f4">50.1090</div>
<div class="abs" style="left:842px;top:784px;width:3px;height:18px;background:#ff1010"></div>
<div class="abs" style="left:7px;top:802px;width:1673px;height:4px;background:linear-gradient(#5c5c5c,#3a3a3a)"></div>
<div class="t" style="left:15px;top:815px;font:10.6px 'Liberation Sans', sans-serif;color:#ffda00;">Max Level:</div>
<div class="sp" style="left:75px;top:810px;width:78px"><div class="v" style="">-50 dBm</div><div class="ar"></div></div>
<div class="t" style="left:15px;top:842px;font:10.6px 'Liberation Sans', sans-serif;color:#ffda00;">Min Level:</div>
<div class="sp" style="left:75px;top:838px;width:78px"><div class="v" style="">-135 dBm</div><div class="ar"></div></div>
<div class="t" style="left:166px;top:815px;font:10.6px 'Liberation Sans', sans-serif;color:#ffda00;">Step Size:</div>
<div class="dd" style="left:223px;top:811px;width:62px;height:19px;line-height:17px;padding-top:0.5px">5 dBm<i style="top:6px"></i></div>
<div class="t" style="left:166px;top:842px;font:10.6px 'Liberation Sans', sans-serif;color:#ffda00;">Averages:</div>
<div class="dd" style="left:223px;top:839px;width:62px;height:19px;line-height:17px;padding-top:0.5px">4<i style="top:6px"></i></div>
<div class="t" style="left:292px;top:815px;font:10.6px 'Liberation Sans', sans-serif;color:#ffda00;">Zoom:</div>
<div class="sp" style="left:335px;top:810px;width:83px"><div class="v" style="text-align:left;padding-left:5px"><span style="background:#8c8c8c;color:#e8e8e8;padding:1px 0">2.0</span></div><div class="ar"></div></div>
<div class="b" style="left:425px;top:809px;width:60px;color:#f4e400;height:22px;font-size:10.6px">Reset</div>
<div class="t" style="left:352px;top:842px;font:10.6px 'Liberation Sans', sans-serif;color:#f0f0f0;">Fill Spectrum</div>
<div class="t" style="left:443px;top:842px;font:10.6px 'Liberation Sans', sans-serif;color:#f0f0f0;">Auto Baseline</div>
<div class="t" style="left:523px;top:840px;font:bold 13px 'Liberation Sans', sans-serif;color:#f0f0f0;">&#x2713;</div>
<div class="t" style="left:539px;top:842px;font:10.6px 'Liberation Sans', sans-serif;color:#f0f0f0;">Filter Spectrum</div>
<div class="b" style="left:1619px;top:837px;width:52px;color:#f4e400;height:22px;font-size:10.3px">Close</div>
<div class="abs" style="left:7px;top:860px;width:1673px;height:2px;background:#555"></div>
<div class="abs" style="left:7px;top:864px;width:1673px;height:2px;background:#8a8a8a"></div>
<div class="abs" style="left:7px;top:866px;width:1673px;height:3px;background:#333"></div>
<div class="t" style="left:15px;top:878px;font:10.6px 'Liberation Sans', sans-serif;color:#ffda00;">Gain:</div>
<div class="sp" style="left:74px;top:873px;width:78px"><div class="v" style="">1.0</div><div class="ar"></div></div>
<div class="t" style="left:15px;top:905px;font:10.6px 'Liberation Sans', sans-serif;color:#ffda00;">Threshold:</div>
<div class="sp" style="left:74px;top:901px;width:78px"><div class="v" style="">-123.7 dBm</div><div class="ar"></div></div>
<div class="t" style="left:167px;top:903px;font:bold 13px 'Liberation Sans', sans-serif;color:#f0f0f0;">&#x2713;</div>
<div class="t" style="left:184px;top:905px;font:10.6px 'Liberation Sans', sans-serif;color:#f0f0f0;">Auto Threshold</div>
<div class="b" style="left:1619px;top:900px;width:52px;color:#f4e400;height:22px;font-size:10.3px">Close</div>
<div class="abs" style="left:4px;top:926px;width:1679px;height:1px;background:#f4f4f4"></div>
<div class="abs" style="left:4px;top:927px;width:1679px;height:22px;background:linear-gradient(#a8a8a8 0px,#5a5a5a 3px,#1c1c1c 6px,#1a1a1a 100%)"></div>
<div class="abs" style="left:1429px;top:930px;width:230px;height:18px;background:linear-gradient(#1e1e1e,#141414 30%,#161616)"></div>
<div class="t" style="left:1428px;top:933px;font:10.8px 'Liberation Sans', sans-serif;color:#f0d000;">Mon Jul 7 03:57:13 2014 UTC [ 22:57:13 Local ]</div>
<div class="abs" style="left:1680px;top:937px;width:2px;height:2px;background:#777"></div><div class="abs" style="left:1677px;top:940px;width:2px;height:2px;background:#777"></div><div class="abs" style="left:1680px;top:940px;width:2px;height:2px;background:#777"></div><div class="abs" style="left:1674px;top:943px;width:2px;height:2px;background:#777"></div><div class="abs" style="left:1677px;top:943px;width:2px;height:2px;background:#777"></div><div class="abs" style="left:1680px;top:943px;width:2px;height:2px;background:#777"></div><div class="abs" style="left:1671px;top:946px;width:2px;height:2px;background:#777"></div><div class="abs" style="left:1674px;top:946px;width:2px;height:2px;background:#777"></div><div class="abs" style="left:1677px;top:946px;width:2px;height:2px;background:#777"></div><div class="abs" style="left:1680px;top:946px;width:2px;height:2px;background:#777"></div>
</body></html>
